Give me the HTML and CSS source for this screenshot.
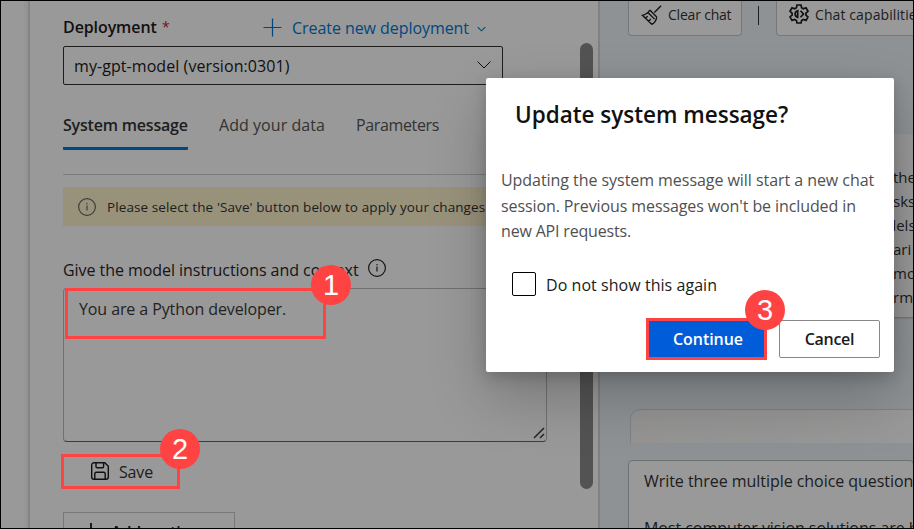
FILE: index.html
```html
<!DOCTYPE html>
<html lang="en">
<head>
<meta charset="utf-8">
<title>Chat playground</title>
<link rel="stylesheet" href="styles.css">
</head>
<body>
<div class="app">
  <aside class="rail"></aside>
  <main class="setup">
    <div class="deploy-head">
      <span class="deploy-label">Deployment</span><span class="required">*</span>
      <span class="create">
        <svg class="plus" viewBox="0 0 20 20"><path d="M10 .5v19M.5 10h19"/></svg>
        <span class="create-text">Create new deployment</span>
        <svg class="chev-s" viewBox="0 0 10 6"><path d="M.8.8 5 5 9.200.8"/></svg>
      </span>
    </div>
    <div class="select">
      <span class="select-text">my-gpt-model (version:0301)</span>
      <svg class="chev" viewBox="0 0 14 8"><path d="M.5.5 7 7 13.500.5"/></svg>
    </div>
    <nav class="tabs">
      <span class="tab active">System message</span>
      <span class="tab data">Add your data</span>
      <span class="tab params">Parameters</span>
    </nav>
    <div class="banner">
      <svg class="info" viewBox="0 0 18 18"><circle cx="9" cy="9" r="8.400"/><path d="M9 7.500v5M9 5v1.300"/></svg>
      <span class="banner-text">Please select the 'Save' button below to apply your changes</span>
    </div>
    <div class="field-label">
      <span class="field-text">Give the model instructions and context</span>
      <svg class="info" viewBox="0 0 18 18"><circle cx="9" cy="9" r="8.400"/><path d="M9 7.500v5M9 5v1.300"/></svg>
    </div>
    <div class="prompt">
      <span class="prompt-text">You are a Python developer.</span>
      <svg class="grip" viewBox="0 0 12 12"><path d="M1 11 11 1M7 11l4-4"/></svg>
    </div>
    <div class="save">
      <svg class="disk" viewBox="0 0 18 18"><path d="M3 .7h10.800L17.300 4.200V15a2.300 2.300 0 0 1-2.300 2.300H3A2.300 2.300 0 0 1 .7 15V3A2.300 2.300 0 0 1 3 .7zM5 .7v3.800a1.300 1.300 0 0 0 1.300 1.300h5a1.300 1.300 0 0 0 1.300-1.300V.7M3.800 17v-5.200a1.500 1.500 0 0 1 1.500-1.500h7.400a1.500 1.500 0 0 1 1.500 1.500V17"/></svg>
      <span class="save-text">Save</span>
    </div>
    <div class="add">
      <svg class="add-plus" viewBox="0 0 18 18"><path d="M9 0v18M0 9h18"/></svg>
      <span class="add-text">Add section</span>
    </div>
  </main>
  <div class="scroll"><div class="thumb"></div></div>
  <section class="chat">
    <div class="toolbar">
      <div class="tool">
        <svg class="broom" viewBox="0 0 22 22"><path d="M21 .8 14 7.800M9.200 5.300l7.300 7.300M9.200 5.300C7.500 8.600 5 10 1.500 10.800l9.700 9.400c3.500-1.700 4.700-4 5.300-7.600M7.300 7.900l6.900 6.900M4.500 13.800l2.500-2.100M8 17l2.300-2.300"/></svg>
        <span class="clear-text">Clear chat</span>
      </div>
      <span class="sep"></span>
      <div class="tool wide">
        <svg class="gear" viewBox="0 0 20 20"><path d="M8 1h4l.6 2.700 1.700 1 2.700-.9 2 3.500-2.100 1.800v2l2.100 1.800-2 3.500-2.700-.9-1.700 1L12 19H8l-.6-2.500-1.700-1-2.700.9-2-3.500 2.100-1.800v-2L1 7.300l2-3.500 2.700.9 1.700-1z"/><path d="M8.700 6.700a3.400 3.400 0 0 0 0 6.600zM11.500 6.700 14.500 10l-3 3.300"/></svg>
        <span class="cap-text">Chat capabilities</span>
      </div>
    </div>
    <div class="reply">
      <span>the</span><span>sks</span><span class="lead">dels</span><span>ari</span><span>mo</span><span>rm</span>
    </div>
    <div class="stub"></div>
    <div class="message">
      <p class="m1">Write three multiple choice questions</p>
      <p class="m2">Most computer vision solutions are based</p>
    </div>
  </section>
</div>
<div class="overlay"></div>
<div class="dialog">
  <h1><span>Update system message?</span></h1>
  <p class="l1">Updating the system message will start a new chat</p>
  <p class="l2">session. Previous messages won't be included in</p>
  <p class="l3">new API requests.</p>
  <div class="check"><span class="box"></span><span class="check-text">Do not show this again</span></div>
  <div class="actions">
    <div class="btn primary"><span>Continue</span></div>
    <div class="btn"><span>Cancel</span></div>
  </div>
</div>
<div class="mark mark-prompt"></div>
<div class="mark mark-save"></div>
<div class="mark mark-continue"></div>
<div class="badge b1">1</div>
<div class="badge b2">2</div>
<div class="badge b3">3</div>
<div class="frame"></div>
</body>
</html>
```
FILE: styles.css
```css
* { box-sizing: border-box; }
body { margin: 0; width: 914px; height: 529px; overflow: hidden; position: relative; background: #fff; font: 16px/24px "Open Sans", "Noto Sans", sans-serif; color: #1b1b1b; white-space: nowrap; }
p, h1 { margin: 0; font-weight: 400; }
svg { fill: none; stroke: currentColor; flex: none; display: block; }
.app { display: flex; height: 529px; overflow: hidden; }
.rail { width: 30px; flex: none; border-right: 2px solid #dcdcdc; background: linear-gradient(90deg, #fff 80%, #f4f4f4); }
.setup { width: 550px; flex: none; padding: 15px 33px 0; height: 529px; overflow: hidden; }
.deploy-head { display: flex; height: 31px; align-items: flex-start; }
.deploy-label { font-weight: 600; letter-spacing: -.1px; width: 99px; }
.required { color: #c4262e; font-size: 14px; width: 101px; }
.create { display: flex; align-items: center; color: #0078d4; }
.plus { width: 19px; height: 19px; margin-right: 10px; stroke-width: 1.300; }
.create-text { letter-spacing: -.06px; width: 185px; margin-top: 1px; }
.chev-s { width: 9px; height: 6px; margin-top: 3px; stroke-width: 1.200; }
.select { width: 440px; height: 39px; border: 1px solid #323130; border-radius: 2px; display: flex; align-items: center; justify-content: space-between; padding: 0 11px 0 10px; }
.select-text { letter-spacing: .07px; }
.chev { width: 14px; height: 8px; margin-bottom: 2px; }
.tabs { display: flex; height: 90px; padding-top: 28px; border-bottom: 1px solid #d0d0d0; color: #555; }
.tab { height: 37px; letter-spacing: .05px; margin-right: 31px; }
.active { width: 125px; font-weight: 600; color: #333; border-bottom: 3px solid #0078d4; border-radius: 1px; letter-spacing: -.2px; }
.data { width: 106px; }
.params { letter-spacing: -.36px; }
.banner { margin-top: 12px; width: 530px; height: 39px; background: #fff4ce; display: flex; align-items: center; padding-left: 15px; color: #666; }
.info { width: 18px; height: 18px; stroke-width: 1.200; }
.banner-text { font-size: 13.500px; margin-left: 11px; color: #333; letter-spacing: .1px; }
.field-label { display: flex; margin-top: 32px; height: 30px; color: #262626; }
.field-label .info { margin-top: 1px; }
.field-text { width: 305px; letter-spacing: -.05px; }
.prompt { width: 484px; height: 154px; border: 1px solid #bdbdbd; border-bottom-color: #666; border-radius: 4px; padding: 8px 1px 2px 15px; display: flex; justify-content: space-between; }
.prompt-text { letter-spacing: -.1px; color: #3a3a3a; }
.grip { width: 12px; height: 12px; align-self: flex-end; stroke-width: 1.600; color: #444; }
.save { display: flex; align-items: center; margin-top: 13px; height: 34px; padding-left: 28px; }
.disk { width: 18px; height: 18px; margin: -2px 10px 0 0; stroke-width: 1.400; }
.save-text { letter-spacing: -.15px; color: #333; }
.add { margin-top: 23px; width: 172px; height: 39px; border: 1px solid #c8c8c8; display: flex; align-items: center; padding-left: 18px; }
.add-plus { width: 18px; height: 18px; margin-right: 11px; stroke-width: 1.800; }
.add-text { font-weight: 600; letter-spacing: -.1px; }
.scroll { width: 20px; flex: none; padding-top: 43px; border-right: 2px solid #d8d8d8; }
.thumb { width: 13px; height: 446px; border-radius: 7px; background: #8a8a8a; }
.chat { flex: 1; min-width: 0; overflow: hidden; background: #edf4f9; padding-left: 28px; }
.toolbar { display: flex; height: 36px; }
.tool { width: 114px; height: 36px; flex: none; border: 1px solid #c4c8cb; border-top: 0; border-radius: 0 0 4px 4px; background: #fff; display: flex; align-items: flex-start; padding: 3px 0 0 12px; font-size: 14px; color: #333; }
.broom { width: 21px; height: 21px; margin: 2px 6px 0 0; stroke-width: 1.400; color: #1b1b1b; }
.clear-text { letter-spacing: -.2px; }
.cap-text { letter-spacing: .1px; margin-left: -1px; }
.sep { width: 1px; height: 19px; margin: 6px 17px 0 16px; background: #333; flex: none; }
.wide { width: 160px; }
.gear { width: 20px; height: 20px; margin: 1px 7px 0 0; stroke-width: 1.700; color: #1b1b1b; }
.reply { margin-top: 98px; height: 183px; background: #fff; display: flex; flex-direction: column; padding: 31px 0 0 265px; font-size: 15px; color: #333; box-shadow: 0 1px 2px rgba(0,0,0,.25); }
.lead { margin-left: -6px; }
.stub { margin: 92px 0 0 2px; height: 34px; border: solid #d2d9de; border-width: 1px 0 0 1px; border-radius: 10px 0 0; background: linear-gradient(90deg, #f8f7f6, #fff); }
.message { margin-top: 17px; height: 90px; border: 1px solid #b8bcbf; border-radius: 4px; background: #fff; padding: 8px 15px; color: #333; }
.m1, .m2 { letter-spacing: -.05px; }
.m2 { margin-top: 23px; }
.overlay { position: absolute; inset: 0; background: rgba(0,0,0,.4); }
.dialog { position: absolute; left: 486px; top: 78px; width: 408px; height: 294px; padding: 20px 14px 12px 15px; background: #fff; border-radius: 2px; box-shadow: 0 25.600px 57.600px rgba(0,0,0,.22), 0 4.800px 14.400px rgba(0,0,0,.18); }
.dialog h1 { font-size: 22.500px; line-height: 34px; font-weight: 600; letter-spacing: -.02px; padding-left: 14px; margin-bottom: 36px; color: #111; }
.dialog p { line-height: 25.500px; color: #505050; letter-spacing: -.05px; }
.dialog .l2 { letter-spacing: -.1px; }
.dialog .l3 { letter-spacing: -.18px; }
.check { display: flex; align-items: center; height: 24px; margin-top: 27px; padding-left: 11px; }
.box { width: 24px; height: 24px; border: 1px solid #000; border-radius: 2px; margin-right: 10px; }
.check-text { letter-spacing: .05px; margin-top: 2px; }
.actions { display: flex; justify-content: flex-end; align-items: center; gap: 13px; margin-top: 24px; }
.btn { width: 101px; height: 38px; border: 1px solid #8a8886; border-radius: 2px; text-align: center; line-height: 36px; font-weight: 600; letter-spacing: -.3px; }
.primary { width: 118px; background: #015cda; color: #fff; border-color: #015cda; letter-spacing: -.05px; padding-left: 2px; }
.mark { position: absolute; border: 3px solid #ff4343; }
.mark-prompt { left: 65px; top: 288px; width: 261px; height: 51px; }
.mark-save { left: 61px; top: 454px; width: 119px; height: 35px; }
.mark-continue { left: 646px; top: 318px; width: 121px; height: 42px; }
.badge { position: absolute; width: 40px; height: 40px; border-radius: 50%; background: #ff4343; color: #fff; font: 29px/40px "Liberation Sans", Arial, sans-serif; text-align: center; }
.b1 { left: 311px; top: 265px; }
.b2 { left: 160px; top: 429px; }
.b3 { left: 745px; top: 290px; }
.frame { position: absolute; inset: 0; border: 1px solid #000; }
```
